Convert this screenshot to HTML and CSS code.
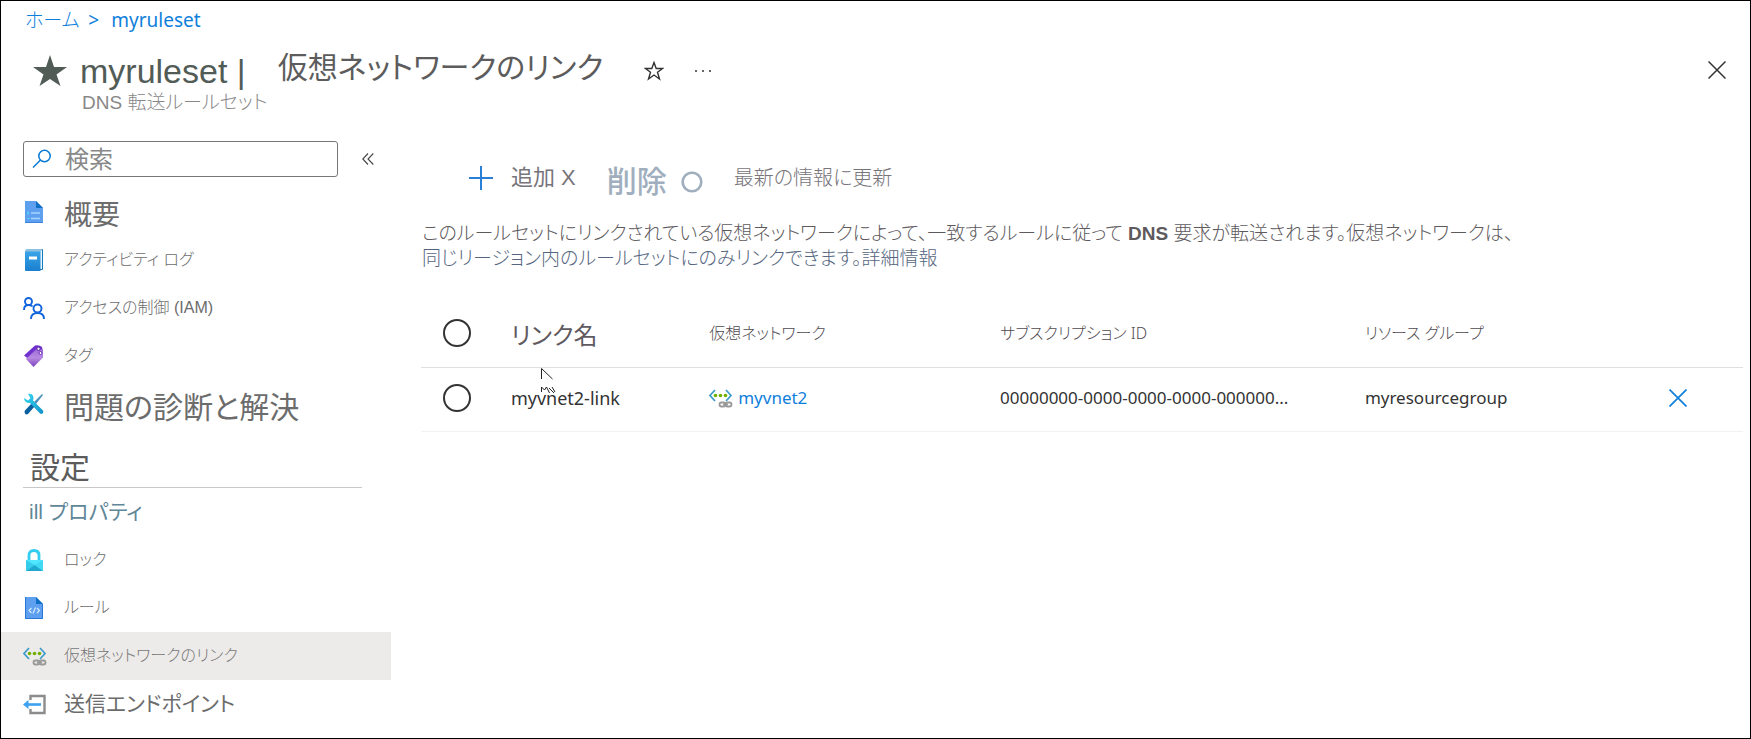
FILE: index.html
```html
<!DOCTYPE html>
<html lang="ja">
<head>
<meta charset="utf-8">
<title>myruleset | 仮想ネットワークのリンク</title>
<link rel="stylesheet" href="styles.css">
</head>
<body>
<svg class="defs" aria-hidden="true">
  <symbol id="vnet" viewBox="0 0 24 22">
    <path d="M6 3 1 8.500l5 5.500M17 3l5 5.500-5 5.500" fill="none" stroke="#3d9bcb" stroke-width="1.700"/>
    <g fill="#72b000"><circle cx="6.500" cy="8.500" r="1.800"/><circle cx="11.500" cy="8.500" r="1.800"/><circle cx="16.500" cy="8.500" r="1.800"/></g>
    <g fill="none" stroke="#999" stroke-width="1.800"><rect x="10.500" y="15.500" width="6" height="4" rx="2"/><rect x="16.500" y="15.500" width="6" height="4" rx="2"/><path d="M14 17.500h5"/></g>
  </symbol>
</svg>
<nav class="crumbs" aria-label="階層"><a class="home" href="#">ホーム</a><span class="sep">&gt;</span><a href="#">myruleset</a></nav>
<header class="head">
  <svg class="star" viewBox="0 0 34 32"><path fill="#525c57" d="M17 0l4 12h13L23.500 19.500 27.500 31 17 24 6.500 31l4-11.500L0 12h13z"/></svg>
  <div class="titles">
    <h1><span class="latin">myruleset |</span><span class="page">仮想ネットワークのリンク</span></h1>
    <p class="kind">DNS 転送ルールセット</p>
  </div>
  <button class="plain fav" aria-label="お気に入り"><svg width="20" height="20" viewBox="0 0 20 20"><path d="M10 1.500l2.200 6h6.300l-5 3.800 2 6.700L10 14l-5.500 4 2-6.700-5-3.800h6.300z" fill="none" stroke="#333" stroke-width="1.400"/></svg></button>
  <button class="plain more" aria-label="その他"><svg width="18" height="4" viewBox="0 0 18 4" fill="#333"><circle cx="2" cy="2" r="1"/><circle cx="9" cy="2" r="1"/><circle cx="16" cy="2" r="1"/></svg></button>
  <button class="plain close" aria-label="閉じる"><svg width="18" height="18" viewBox="0 0 18 18"><path d="M.5.5l17 17M17.500.5l-17 17" stroke="#333" stroke-width="1.500"/></svg></button>
</header>
<div class="layout">
  <aside class="side">
    <div class="searchrow">
      <label class="search"><svg width="20" height="20" viewBox="0 0 20 20" fill="none" stroke="#0078d4" stroke-width="1.500"><circle cx="12.500" cy="7" r="5.700"/><path d="M8.500 11 1 18.500"/></svg><input type="text" placeholder="検索" aria-label="検索"></label>
      <button class="plain" aria-label="折りたたむ"><svg width="12" height="12" viewBox="0 0 12 12"><path d="M6 .5.800 6 6 11.500M11.300.5 6 6l5.300 5.500" fill="none" stroke="#444" stroke-width="1.100"/></svg></button>
    </div>
    <nav class="menu" aria-label="メニュー">
      <a href="#" class="large"><svg viewBox="0 0 24 22"><path d="M2 0h11l7 7v15H2z" fill="#5ea0ef"/><path d="M13 0l7 7h-7z" fill="#0f6fc5"/><path d="M2 21h18v1H2z" fill="#3d84dc"/><path d="M8 12h9M8 17.500h9" stroke="#a9d3ff" stroke-width="1.500"/><path d="M5 10.500v3M4.500 17.500h2" stroke="#50e6ff" stroke-width="1.200"/></svg><span>概要</span></a>
      <a href="#"><svg viewBox="0 0 24 22"><defs><linearGradient id="book" x2="0" y2="1"><stop stop-color="#3ba5e8"/><stop offset="1" stop-color="#1a7fd0"/></linearGradient></defs><path d="M4 .5h15.500v20H4z" fill="#e5f4fd" stroke="#1479bd"/><path d="M2 2h15.500v20H3q-1 0-1-1z" fill="url(#book)"/><path d="M2 2.500q0-2.500 2-2.500h15l-1.500 2.500z" fill="#8cc0e0"/><path d="M6 7.500h8v3H6z" fill="#fff"/></svg><span>アクティビティ ログ</span></a>
      <a href="#"><svg viewBox="0 0 24 22" fill="none" stroke="#1164dc" stroke-width="1.900"><circle cx="5.500" cy="4.500" r="3.500"/><path d="M1 13q0-5 4.500-5 3 0 4 1.500"/><circle cx="14.500" cy="11.500" r="4"/><path d="M8 22q0-6 6.500-6t6.500 6"/></svg><span>アクセスの制御 (IAM)</span></a>
      <a href="#"><svg viewBox="0 0 24 22"><defs><linearGradient id="tag" x2="0" y2="1"><stop stop-color="#9b6bd6"/><stop offset=".5" stop-color="#b88ae0"/><stop offset="1" stop-color="#7b43bd"/></linearGradient></defs><path d="M1 10.500 12 .5q4-1 7 1.500l1 5L7 15z" fill="#7030cf"/><path d="M4 13 14 3.500l6 1v8L10.500 22 3 14z" fill="url(#tag)"/><circle cx="15.500" cy="3.800" r="1.700" fill="#eee" stroke="#5c24a8"/><circle cx="17.500" cy="8" r="1.500" fill="#fff" stroke="#7030b9"/></svg><span>タグ</span></a>
      <a href="#" class="large long"><svg viewBox="0 0 24 22"><defs><linearGradient id="wrench" x2="1" y2="1"><stop stop-color="#35d8f4"/><stop offset="1" stop-color="#1290c8"/></linearGradient></defs><path d="M19 1l1 1-7 9-2-2z" fill="#4a91bd"/><path d="M9 10l3 3-7 8q-2 1-3-.5t0-3z" fill="#0a5f9f"/><path d="M5 1q5-1 5.500 4l-.5 2.500 10 10q1 2-.5 3t-3-.5l-9.500-10Q1 10 1 5l4 2.500L7.500 5z" fill="url(#wrench)"/></svg><span>問題の診断と解決</span></a>
      <h2>設定</h2>
      <a href="#" class="medium props"><span>ill プロパティ</span></a>
      <a href="#"><svg viewBox="0 0 24 22"><path d="M6 11V6.500q0-5 5-5t5 5V11" fill="none" stroke="#32cdf0" stroke-width="2.800"/><path d="M3 11h17v11H3z" fill="#50e6ff"/><path d="M3 11l8.500 5L3 22z" fill="#35cdea"/><path d="M20 11l-8.500 5 8.500 6z" fill="#42d9f4"/><path d="M3 22l8.500-6 8.500 6z" fill="#1fa9cf"/></svg><span>ロック</span></a>
      <a href="#"><svg viewBox="0 0 24 22"><path d="M2 0h11l7 7v15H2z" fill="#5ea0ef"/><path d="M13 0l7 7h-7z" fill="#0f6fc5"/><path d="M2.500 0v21.500h17V7" fill="none" stroke="#2a78d5"/><path d="M8.500 11 6 13.500 8.500 16M14 11l2.500 2.500L14 16M12.500 10.500l-2.500 6" fill="none" stroke="#d8edff" stroke-width="1.100"/></svg><span>ルール</span></a>
      <a href="#" class="current" aria-current="page"><svg viewBox="0 0 24 22"><use href="#vnet"/></svg><span>仮想ネットワークのリンク</span></a>
      <a href="#" class="medium"><svg viewBox="0 0 24 22" fill="none"><path d="M7.500 7V3h14v17H7.500V16" stroke="#8c8c8c" stroke-width="2.400"/><path d="M18 11.500H4" stroke="#3da2f0" stroke-width="2.600"/><path d="M0 11.500 5.500 7v9z" fill="#3da2f0"/></svg><span>送信エンドポイント</span></a>
    </nav>
  </aside>
  <main class="main">
    <div class="tools">
      <button class="plain add"><svg width="24" height="24" viewBox="0 0 24 24"><path d="M0 12h24M12 0v24" stroke="#2a7fd6" stroke-width="2"/></svg>追加 X</button>
      <button class="plain del">削除<svg width="22" height="22" viewBox="0 0 22 22"><circle cx="11" cy="11" r="9.300" fill="none" stroke="#a0aebe" stroke-width="2.600"/></svg></button>
      <button class="plain refresh">最新の情報に更新</button>
    </div>
    <p class="about">このルールセットにリンクされている仮想ネットワークによって、一致するルールに従って <b>DNS</b> 要求が転送されます。仮想ネットワークは、<br><span class="note">同じリージョン内のルールセットにのみリンクできます。<a href="#">詳細情報</a></span></p>
    <table>
      <colgroup><col class="c1"><col class="c2"><col class="c3"><col class="c4"><col class="c5"><col class="c6"></colgroup>
      <thead><tr><th><input type="radio" name="row" aria-label="すべて"></th><th class="name">リンク名</th><th>仮想ネットワーク</th><th>サブスクリプション ID</th><th>リソース グループ</th><th></th></tr></thead>
      <tbody><tr><td><input type="radio" name="row" aria-label="myvnet2-link"></td><td class="link"><span class="anchor">myvnet2-link<svg class="cursor" width="15" height="28" viewBox="0 0 15 28" fill="none" stroke="#222"><path d="M.5 11V.5l11 10.500M.5 24v-5l3 3 2-3 3 6M8 20l5 5M11 19l3 5"/></svg></span></td><td><a class="vnet" href="#"><svg width="24" height="22"><use href="#vnet"/></svg>myvnet2</a></td><td>00000000-0000-0000-0000-000000...</td><td>myresourcegroup</td><td><button class="plain" aria-label="削除"><svg width="18" height="18" viewBox="0 0 18 18"><path d="M.5.5l17 17M17.500.5l-17 17" stroke="#0f7fdc" stroke-width="1.700"/></svg></button></td></tr></tbody>
    </table>
  </main>
</div>
</body>
</html>
```
FILE: styles.css
```css
* { box-sizing: border-box; }
body {
  margin: 0;
  min-height: 100vh;
  border: 1px solid #000;
  background: #fff;
  color: #666;
  font: 300 16px/24px "Liberation Sans", "Noto Sans CJK JP", sans-serif;
  font-feature-settings: "palt";
}
a { color: inherit; text-decoration: none; }
b { font-weight: 700; }
h1, h2, p { margin: 0; font-weight: 400; }
svg { display: block; flex: none; }
.defs { position: absolute; width: 0; height: 0; }
.plain { display: flex; align-items: center; padding: 0; border: 0; background: none; color: inherit; font: inherit; font-feature-settings: inherit; }
.crumbs { display: flex; align-items: center; height: 37px; padding-left: 24px; color: #0f7fdc; font-family: "Noto Sans", "Noto Sans CJK JP", sans-serif; font-size: 19px; font-weight: 400; }
.crumbs .home { font-weight: 300; }
.crumbs .sep { margin: 0 12px 0 9px; }
.head { display: flex; align-items: flex-start; height: 103px; padding: 9px 24px 0 32px; }
.star { width: 34px; height: 32px; margin: 8px 13px 0 0; }
h1 { display: flex; align-items: center; height: 48px; white-space: nowrap; font-size: 30px; }
.latin { font-size: 34px; color: #525c57; }
.page { margin-left: 32px; padding-bottom: 6px; color: #5c5c5c; }
.kind { padding-left: 2px; font-size: 19px; font-weight: 300; line-height: 16px; color: #888; }
.fav { margin: 14px 0 0 41px; }
.more { margin: 22px 0 0 30px; }
.close { margin: 14px 0 0 auto; }
.layout { display: flex; }
.side { flex: none; width: 390px; }
.searchrow { display: flex; align-items: center; gap: 24px; padding-left: 22px; }
.search { display: flex; align-items: center; gap: 13px; width: 315px; height: 36px; padding: 0 8px; border: 1px solid #777; border-radius: 3px; }
.search input { flex: 1; min-width: 0; padding: 2px 0 0; border: 0; outline: 0; background: none; font: inherit; font-size: 24px; font-weight: 400; }
.search input::placeholder { color: #888; opacity: 1; }
.menu { padding-top: 11px; }
.menu a { display: flex; align-items: center; gap: 17px; height: 48px; padding-left: 22px; color: #6c6c6c; }
.menu svg { width: 24px; height: 22px; }
.menu .large { font-size: 28px; font-weight: 400; }
.menu .large span { padding-top: 8px; }
.menu .long { font-size: 30px; }
.menu .medium { font-size: 21px; font-weight: 400; }
.menu .current { background: #edebe9; color: #777; }
.menu .props { padding-left: 28px; color: #5f8797; }
h2 { margin: 0 29px 0 22px; padding: 20px 0 0 7px; border-bottom: 1px solid #c8c8c8; font-size: 30px; line-height: 39px; color: #5c5c5c; }
.main { flex: 1; min-width: 0; padding: 12px 7px 0 30px; }
.tools { display: flex; align-items: center; height: 50px; padding-left: 48px; color: #77747a; }
.add { gap: 18px; font-size: 22px; font-weight: 400; }
.del { gap: 14px; margin-left: 31px; padding-top: 8px; font-size: 30px; font-weight: 500; color: #a0aebe; }
.refresh { margin-left: 31px; font-size: 20px; }
.about { padding: 18px 0 29px 1px; font-size: 19px; font-weight: 300; line-height: 25px; color: #5d595d; }
.note { color: #556680; }
table { width: 100%; table-layout: fixed; border-collapse: collapse; color: #333; font-family: "Noto Sans", "Noto Sans CJK JP", sans-serif; font-weight: 400; }
th, td { padding: 0; text-align: left; white-space: nowrap; }
th { height: 67px; border-bottom: 1px solid #dfdfdf; color: #4f4a50; font-weight: 300; }
th.name { padding-top: 4px; font-size: 24px; font-weight: 400; color: #5f5a60; }
td { height: 64px; padding-bottom: 2px; border-bottom: 1px solid #f2f2f2; font-size: 17px; }
td.link { font-size: 18px; }
.c1 { width: 6.8%; } .c2 { width: 15%; } .c3 { width: 22%; } .c4 { width: 27.600%; } .c5 { width: 23%; } .c6 { width: 5.600%; }
input[type="radio"] { display: block; appearance: none; width: 28px; height: 28px; margin: 0 0 0 22px; border: 2px solid #333; border-radius: 50%; }
.anchor { position: relative; }
.cursor { position: absolute; left: 30px; top: -18px; }
.vnet { display: flex; align-items: center; gap: 5px; color: #0f7fdc; }
```
